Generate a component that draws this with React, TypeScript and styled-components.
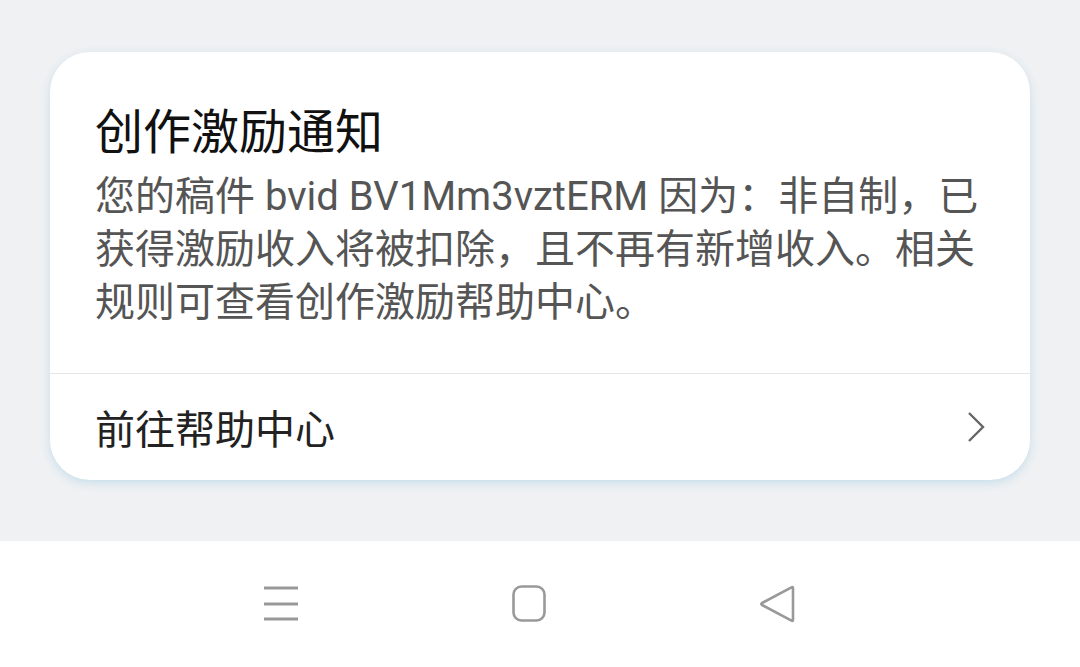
import React from 'react';
import styled, { createGlobalStyle } from 'styled-components';

const GlobalStyle = createGlobalStyle`
  html, body {
    margin: 0;
    padding: 0;
    background: #eff1f3;
  }
  body {
    font-family: Roboto, "Noto Sans CJK SC", sans-serif;
  }
`;

const Screen = styled.div`
  width: 1080px;
  height: 667px;
  display: flex;
  flex-direction: column;
  overflow: hidden;
`;

const Content = styled.div`
  flex: 1;
  padding: 52px 50px 0;
  background: #eff1f3;
`;

const Card = styled.div`
  background: #fff;
  border-radius: 40px;
  box-shadow: 0 3px 8px rgba(150, 200, 225, 0.45);
  overflow: hidden;
`;

const Body = styled.div`
  padding: 50px 56px 44px 45px;
`;

const Title = styled.h1`
  margin: 0 0 6px;
  font-size: 48px;
  line-height: 62px;
  font-weight: 400;
  color: #111;
`;

const Text = styled.p`
  margin: 0;
  font-size: 40px;
  line-height: 53px;
  color: #555;
`;

const Line = styled.span<{ $justify?: boolean }>`
  display: block;
  white-space: nowrap;
  text-align: ${p => (p.$justify ? 'justify' : 'left')};
  text-align-last: ${p => (p.$justify ? 'justify' : 'left')};
`;

const Divider = styled.div`
  height: 1px;
  background: #e6e6e6;
`;

const LinkRow = styled.div`
  height: 106px;
  display: flex;
  align-items: center;
  justify-content: space-between;
  padding: 0 42px 0 45px;
  font-size: 40px;
  color: #222;
`;

const NavBar = styled.div`
  flex: 0 0 126px;
  height: 126px;
  background: #fff;
  display: flex;
  align-items: center;
  justify-content: center;
  gap: 208px;
  padding-right: 22px;
`;

const NavIcon = styled.svg`
  width: 40px;
  height: 40px;
  display: block;
`;

export default function App() {
  return (
    <>
      <GlobalStyle />
      <Screen>
        <Content>
          <Card>
            <Body>
              <Title>创作激励通知</Title>
              <Text>
                <Line $justify>您的稿件 bvid BV1Mm3vztERM 因为：非自制，已</Line>
                <Line $justify>获得激励收入将被扣除，且不再有新增收入。相关</Line>
                <Line>规则可查看创作激励帮助中心。</Line>
              </Text>
            </Body>
            <Divider />
            <LinkRow>
              <span>前往帮助中心</span>
              <svg width="24" height="34" viewBox="0 0 24 34">
                <path d="M5 3 L19 17 L5 31" fill="none" stroke="#666" strokeWidth="2.4" />
              </svg>
            </LinkRow>
          </Card>
        </Content>
        <NavBar>
          <NavIcon viewBox="0 0 40 40">
            <path d="M3 4 H37 M3 20 H37 M3 35 H37" stroke="#999" strokeWidth="3" />
          </NavIcon>
          <NavIcon viewBox="0 0 40 40">
            <rect x="4.5" y="2.5" width="31" height="34" rx="8" fill="none" stroke="#999" strokeWidth="2.6" />
          </NavIcon>
          <NavIcon viewBox="0 0 40 40">
            <path d="M36 4 Q36 2.5 34.5 3.3 L5 19 Q3.5 20 5 21 L34.5 36.7 Q36 37.5 36 36 Z" fill="none" stroke="#999" strokeWidth="2.6" strokeLinejoin="round" />
          </NavIcon>
        </NavBar>
      </Screen>
    </>
  );
}
